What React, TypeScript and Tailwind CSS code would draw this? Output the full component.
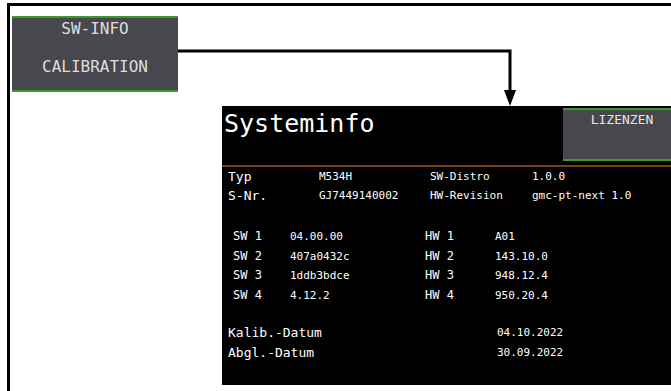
const mono = { fontFamily: '"DejaVu Sans Mono", "Liberation Mono", monospace' };

const topRows = [
  ["Typ", "M534H", "SW-Distro", "1.0.0"],
  ["S-Nr.", "GJ7449140002", "HW-Revision", "gmc-pt-next 1.0"],
];

const versionRows = [
  ["SW 1", "04.00.00", "HW 1", "A01"],
  ["SW 2", "407a0432c", "HW 2", "143.10.0"],
  ["SW 3", "1ddb3bdce", "HW 3", "948.12.4"],
  ["SW 4", "4.12.2", "HW 4", "950.20.4"],
];

const dateRows = [
  ["Kalib.-Datum", "04.10.2022"],
  ["Abgl.-Datum", "30.09.2022"],
];

function Connector() {
  return (
    <svg className="absolute left-0 top-0 pointer-events-none" width="671" height="391">
      <path d="M178 51 H510 V92" fill="none" stroke="#000" strokeWidth="3" />
      <polygon points="504,90 516,90 510,106" fill="#000" />
    </svg>
  );
}

export default function App() {
  return (
    <div className="relative w-[671px] h-[391px] overflow-hidden bg-white pl-[7px] pt-[3px]" style={mono}>
      <div className="w-[700px] h-[400px] border-l-[3px] border-t-[3px] border-black flex flex-col">
        <div className="ml-[2px] mt-[10px] w-[166px] h-[76px] bg-[#47474d] border-y-2 border-[#3c9a2c] flex flex-col items-center text-[16px] text-[#dedede]">
          <div className="pt-[1px] leading-[20px]">SW-INFO</div>
          <div className="mt-[18px] leading-[20px]">CALIBRATION</div>
        </div>

        <div className="ml-[212px] mt-[14px] w-[459px] h-[279px] bg-black text-white flex flex-col">
          <div className="flex h-[61px] border-b-2 border-[#7a3e10]">
            <div className="flex-1 pl-[2px] pt-[3px] text-[25px] leading-[30px]">Systeminfo</div>
            <div className="mt-[2px] w-[118px] h-[53px] bg-[#47474d] border-y-2 border-[#3c9a2c] flex justify-center text-[13px] text-[#e6e6e6] leading-[18px] pt-[1px]">
              LIZENZEN
            </div>
          </div>

          <div className="pl-[6px]">
            {topRows.map((r) => (
              <div key={r[0]} className="grid grid-cols-[91px_111px_102px_1fr] leading-[19px] items-center">
                <span className="text-[13px]">{r[0]}</span>
                <span className="text-[11px]">{r[1]}</span>
                <span className="text-[11px]">{r[2]}</span>
                <span className="text-[11px]">{r[3]}</span>
              </div>
            ))}
          </div>

          <div className="pl-[11px] mt-[22px]">
            {versionRows.map((r) => (
              <div key={r[0]} className="grid grid-cols-[57px_135px_70px_1fr] leading-[19.5px] items-center">
                <span className="text-[12px]">{r[0]}</span>
                <span className="text-[11px]">{r[1]}</span>
                <span className="text-[12px]">{r[2]}</span>
                <span className="text-[11px]">{r[3]}</span>
              </div>
            ))}
          </div>

          <div className="pl-[6px] mt-[18px]">
            {dateRows.map((r) => (
              <div key={r[0]} className="grid grid-cols-[269px_1fr] leading-[19.5px] items-center">
                <span className="text-[13px]">{r[0]}</span>
                <span className="text-[11px]">{r[1]}</span>
              </div>
            ))}
          </div>
        </div>
      </div>
      <Connector />
    </div>
  );
}
